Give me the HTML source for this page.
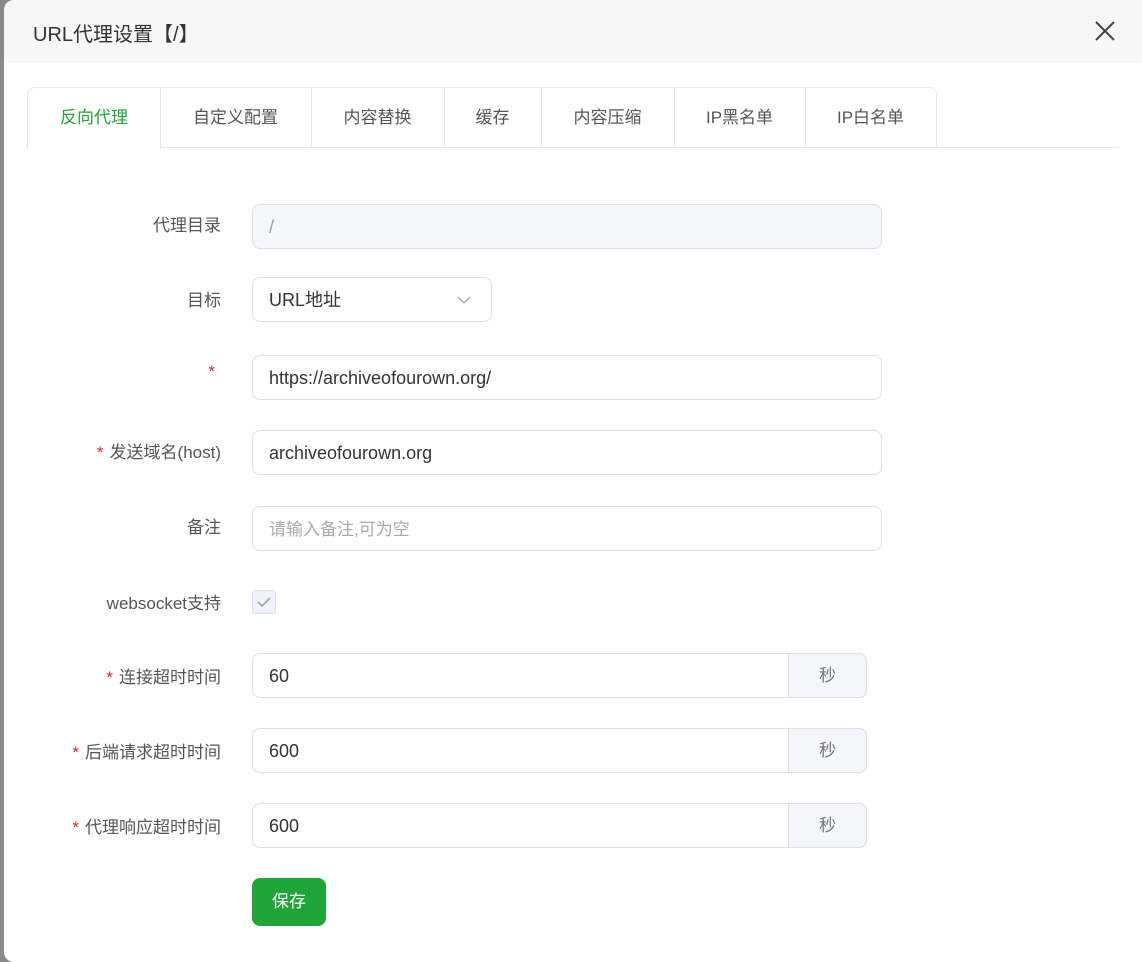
<!DOCTYPE html><html><head><meta charset="utf-8"><style>
*{box-sizing:border-box;margin:0;padding:0}
body{width:1142px;height:962px;background:#8a8a8a;font-family:"Liberation Sans","Noto Sans CJK SC",sans-serif;overflow:hidden;position:relative}
.m{position:absolute;left:4px;top:0;width:1138px;height:962px;background:#fff;border-radius:10px 0 0 10px;overflow:hidden}
.hd{height:63px;background:#f7f7f7;position:relative}
.hd .t{position:absolute;left:29px;top:18px;font-size:20px;color:#333}
.x{position:absolute;right:26px;top:20px}
.tabs{position:absolute;left:23px;top:87px;width:1092px;height:61px;border-bottom:1px solid #e4e7ed}
.tab{position:absolute;top:0;height:61px;border:1px solid #e4e7ed;border-left:none;border-bottom:none;font-size:17px;color:#555;text-align:center;line-height:60px}
.tab.a{color:#20a53a;border-left:1px solid #e4e7ed;border-radius:8px 0 0 0;background:#fff;height:62px}
.tab.l{border-radius:0 8px 0 0}
.lb{position:absolute;right:921px;font-size:17px;color:#555;text-align:right;white-space:nowrap}
.lb i{color:#e02020;font-style:normal;margin-right:6px}
.in{position:absolute;left:248px;width:630px;height:45px;border:1px solid #dcdfe6;border-radius:8px;font-size:18px;color:#333;padding-left:16px;line-height:45px}
.sf{position:absolute;left:784px;top:-1px;width:79px;height:45px;background:#f5f6fa;border:1px solid #dcdfe6;border-radius:0 8px 8px 0;text-align:center;color:#777;font-size:17px;line-height:43px}
</style></head><body>
<div class="m">
<div class="hd"><div class="t">URL代理设置【/】</div>
<svg class="x" width="22" height="22" viewBox="0 0 22 22"><path d="M2 2L20 20M20 2L2 20" stroke="#444" stroke-width="2"/></svg></div>
<div class="tabs">
<div class="tab a" style="left:0;width:134px">反向代理</div>
<div class="tab" style="left:133px;width:152px">自定义配置</div>
<div class="tab" style="left:284px;width:134px">内容替换</div>
<div class="tab" style="left:417px;width:98px">缓存</div>
<div class="tab" style="left:514px;width:134px">内容压缩</div>
<div class="tab" style="left:647px;width:132px">IP黑名单</div>
<div class="tab l" style="left:778px;width:132px">IP白名单</div>
</div>
<div class="lb" style="top:211px">代理目录</div>
<div class="in" style="top:204px;background:#f5f6fa;color:#999">/</div>
<div class="lb" style="top:286px">目标</div>
<div class="in" style="top:277px;width:240px">URL地址<svg style="position:absolute;right:20px;top:18px" width="14" height="9" viewBox="0 0 14 9"><path d="M1 1L7 7L13 1" stroke="#aaa" stroke-width="1.3" fill="none"/></svg></div>
<div class="lb" style="top:362px"><i>*</i></div>
<div class="in" style="top:355px">https://archiveofourown.org/</div>
<div class="lb" style="top:438px"><i>*</i>发送域名(host)</div>
<div class="in" style="top:430px">archiveofourown.org</div>
<div class="lb" style="top:513px">备注</div>
<div class="in" style="top:506px;color:#aaa;font-size:17px">请输入备注,可为空</div>
<div class="lb" style="top:589px">websocket支持</div>
<div style="position:absolute;left:248px;top:590px;width:24px;height:24px;border:1px solid #dcdfe6;border-radius:3px;background:#eef2fb"><svg width="22" height="22" viewBox="0 0 22 22"><path d="M5 11L9 15L17 7" stroke="#999" stroke-width="1.5" fill="none"/></svg></div>
<div class="lb" style="top:663px"><i>*</i>连接超时时间</div>
<div class="in" style="top:653px;width:615px">60<div class="sf" style="left:535px">秒</div></div>
<div class="lb" style="top:738px"><i>*</i>后端请求超时时间</div>
<div class="in" style="top:728px;width:615px">600<div class="sf" style="left:535px">秒</div></div>
<div class="lb" style="top:813px"><i>*</i>代理响应超时时间</div>
<div class="in" style="top:803px;width:615px">600<div class="sf" style="left:535px">秒</div></div>
<div style="position:absolute;left:248px;top:878px;width:74px;height:48px;background:#20a53a;border-radius:8px;color:#fff;font-size:17px;text-align:center;line-height:48px">保存</div>
</div>
</body></html>
